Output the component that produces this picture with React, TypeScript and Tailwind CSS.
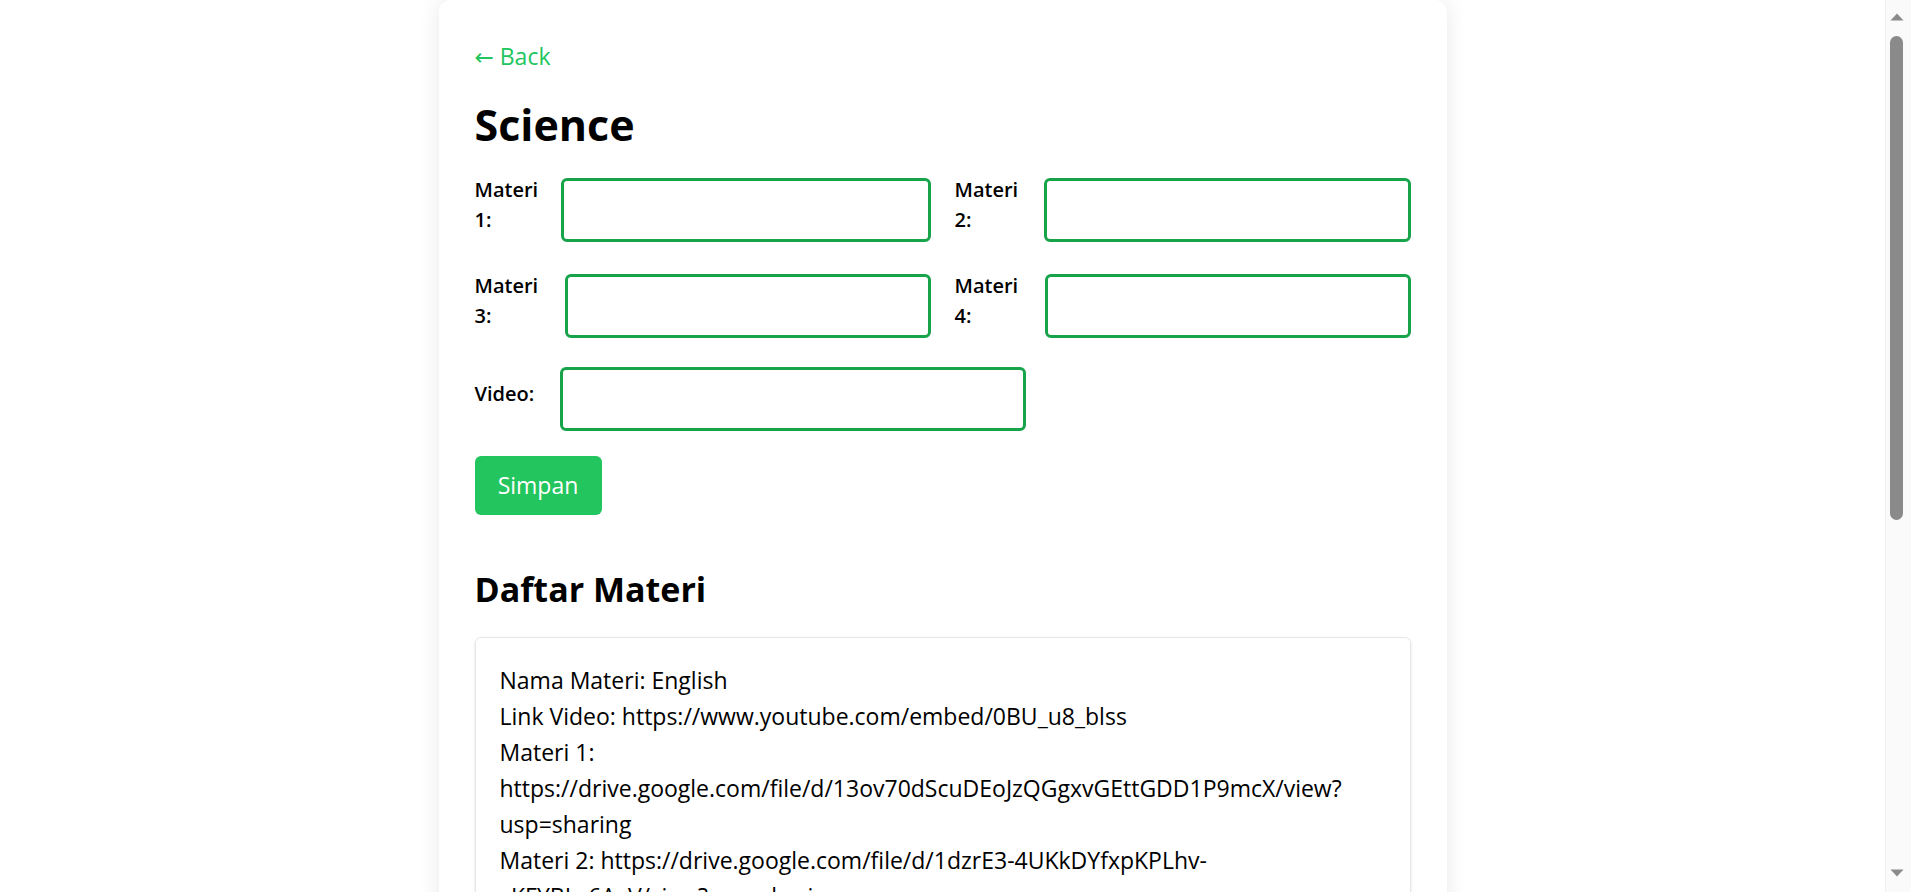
import React from "react";

const labelBase =
  "shrink-0 mb-[10px] mr-[12px] text-[20px] leading-[30px] font-semibold text-black";
const inputBase =
  "h-[64px] rounded-[6px] border-[3px] border-[#16a34a] bg-white px-3 text-[22px] outline-none";

function ScrollArrowUp() {
  return (
    <svg width="14" height="8" viewBox="0 0 14 8" className="block">
      <path d="M7 0.5 L13.5 7.5 L0.5 7.5 Z" fill="#8a8a8a" />
    </svg>
  );
}

function ScrollArrowDown() {
  return (
    <svg width="14" height="8" viewBox="0 0 14 8" className="block">
      <path d="M0.5 0.5 L13.5 0.5 L7 7.5 Z" fill="#8a8a8a" />
    </svg>
  );
}

export default function App() {
  return (
    <div className="flex h-[892px] w-full overflow-hidden bg-white font-['Open_Sans','DejaVu_Sans',sans-serif] text-black">
      <main className="h-full flex-1 overflow-hidden">
        <div className="mx-auto w-[1008px] rounded-[12px] bg-white px-9 pt-[40px] pb-10 shadow-[0_0_22px_rgba(0,0,0,0.09)]">
          <a className="block text-[23px] leading-[32px] text-[#22c55e]" href="#">
            ← Back
          </a>
          <h1 className="mt-[26px] text-[43px] font-bold leading-[54px]">Science</h1>

          <form className="mt-[23px] flex flex-col gap-[26px]">
            <div className="flex gap-6">
              <div className="flex flex-1 items-center">
                <label className={labelBase + " w-[74px]"}>Materi 1:</label>
                <input className={inputBase + " min-w-0 flex-1"} />
              </div>
              <div className="flex flex-1 items-center">
                <label className={labelBase + " w-[77px]"}>Materi 2:</label>
                <input className={inputBase + " min-w-0 flex-1"} />
              </div>
            </div>
            <div className="flex gap-6">
              <div className="flex flex-1 items-center">
                <label className={labelBase + " w-[78px]"}>Materi 3:</label>
                <input className={inputBase + " min-w-0 flex-1"} />
              </div>
              <div className="flex flex-1 items-center">
                <label className={labelBase + " w-[78px]"}>Materi 4:</label>
                <input className={inputBase + " min-w-0 flex-1"} />
              </div>
            </div>
            <div className="flex items-center">
              <label className={labelBase + " w-[73px]"}>Video:</label>
              <input className={inputBase + " w-[466px]"} />
            </div>
          </form>

          <button
            type="button"
            className="mt-[25px] h-[59px] w-[127px] rounded-[6px] bg-[#22c55e] text-[23px] text-white"
          >
            Simpan
          </button>

          <h2 className="mt-[53px] text-[34px] font-bold leading-[42px]">Daftar Materi</h2>

          <div className="mt-[27px] rounded-[6px] border border-[#e5e7eb] p-6 text-[23px] leading-[36px] shadow-sm">
            <p>Nama Materi: English</p>
            <p>Link Video: https://www.youtube.com/embed/0BU_u8_blss</p>
            <p>
              Materi 1: https://drive.google.com/file/d/13ov70dScuDEoJzQGgxvGEttGDD1P9mcX/view?usp=sharing
            </p>
            <p>
              Materi 2: https://drive.google.com/file/d/1dzrE3-4UKkDYfxpKPLhv-vKFYBLv6AxV/view?usp=sharing
            </p>
            <p>
              Materi 3: https://drive.google.com/file/d/1Xq8mPbn2KcT7ZrWvL0sYdE4uHfJgA9oN/view?usp=sharing
            </p>
            <p>
              Materi 4: https://drive.google.com/file/d/1Lm3QpRt5VxYz8WcB2nDkE6sFgH0jUaIo/view?usp=sharing
            </p>
            <div className="mt-3 flex gap-3">
              <button type="button" className="rounded-[6px] bg-[#eab308] px-6 py-3 text-white">
                Edit
              </button>
              <button type="button" className="rounded-[6px] bg-[#ef4444] px-6 py-3 text-white">
                Hapus
              </button>
            </div>
          </div>
        </div>
      </main>

      <aside className="flex h-full w-[26px] shrink-0 flex-col border-l border-[#f0f0f0] bg-[#fafafa] pl-[4px]">
        <div className="mt-[13px]">
          <ScrollArrowUp />
        </div>
        <div className="mt-[15px] h-[484px] w-[13px] rounded-full bg-[#8a8a8a]" />
        <div className="flex-1" />
        <div className="mb-[15px]">
          <ScrollArrowDown />
        </div>
      </aside>
    </div>
  );
}
